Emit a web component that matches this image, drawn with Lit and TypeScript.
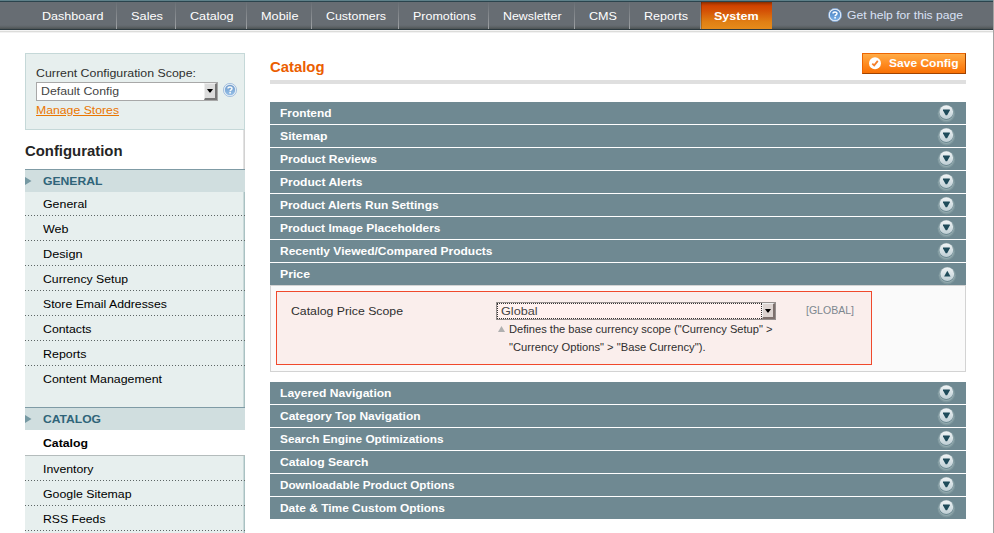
import { LitElement, html, svg, css } from "lit";
import { customElement, property } from "lit/decorators.js";

const measurer = document.createElement("canvas").getContext("2d")!;

/** A single line of text whose glyphs are stretched to fill a given width. */
@customElement("fit-text")
class FitText extends LitElement {
  @property() text = "";
  @property({ type: Number }) w = 0;
  static styles = css`
    :host { display: inline-block; white-space: nowrap; }
    span { display: block; width: max-content; transform-origin: 0 0; }
  `;
  render() {
    const cs = getComputedStyle(this);
    measurer.font = `${cs.fontWeight} ${cs.fontSize} "Liberation Sans"`;
    const scale = this.w / measurer.measureText(this.text).width;
    return html`<span style="transform:scaleX(${scale.toFixed(4)})">${this.text}</span>`;
  }
}

type Item = [label: string, width: number];
const fit = ([label, width]: Item) => html`<fit-text .text=${label} .w=${width}></fit-text>`;

const nav: [string, number, number][] = [
  ["Dashboard", 61.5, 89], ["Sales", 32, 59], ["Catalog", 43.5, 71], ["Mobile", 37.5, 65],
  ["Customers", 60, 87], ["Promotions", 63, 90], ["Newsletter", 58.5, 86], ["CMS", 28, 55], ["Reports", 44, 71],
];
const general: Item[] = [
  ["General", 44], ["Web", 25.5], ["Design", 39.5], ["Currency Setup", 85], ["Store Email Addresses", 124.5],
  ["Contacts", 48.5], ["Reports", 43.5], ["Content Management", 119],
];
const catalog: Item[] = [["Catalog", 45], ["Inventory", 50.5], ["Google Sitemap", 88.5], ["RSS Feeds", 62.5], ["", 0]];
const before: Item[] = [
  ["Frontend", 51.5], ["Sitemap", 47.5], ["Product Reviews", 97], ["Product Alerts", 83], ["Product Alerts Run Settings", 159],
  ["Product Image Placeholders", 160.5], ["Recently Viewed/Compared Products", 212.5], ["Price", 30],
];
const after: Item[] = [
  ["Layered Navigation", 111.5], ["Category Top Navigation", 140.5], ["Search Engine Optimizations", 163.5],
  ["Catalog Search", 88.5], ["Downloadable Product Options", 174.5], ["Date & Time Custom Options", 165],
];

const toggle = (open: boolean) => html`<svg class="toggle ${open ? "open" : ""}" width="20" height="20" viewBox="0 0 20 20">
  <defs><linearGradient id="g" x2="0" y2="1"><stop stop-color="#f0f4f6"/><stop offset="1" stop-color="#bfcfd5"/></linearGradient></defs>
  <circle cx="10.3" cy="10.6" r="8.8" fill="#7e979d"/>
  <circle cx="10.3" cy="10.2" r="7.8" fill="#94abb0"/>
  <circle cx="10.3" cy="9.7" r="7.1" fill="#5f7d86"/>
  <circle cx="10.3" cy="9.1" r="6.9" fill="url(#g)"/>
  ${open
    ? svg`<path d="M10.3 5.7 13.5 11.5H7.1Z" fill="#1f4b5a"/>`
    : svg`<path d="M7 6.4H13.8V7.4L11.1 12.2H9.7L7 7.4Z" fill="#1f4b5a"/>`}
</svg>`;

const help = html`<svg class="help" width="14" height="14" viewBox="0 0 14 14">
  <defs><linearGradient id="h" x2="0" y2="1"><stop stop-color="#4a80c0"/><stop offset="1" stop-color="#7aafe6"/></linearGradient></defs>
  <circle cx="7" cy="7" r="6.7" fill="#e9f0f8"/>
  <circle cx="7" cy="7" r="6.6" fill="none" stroke="#6b98cf" stroke-width=".7"/>
  <circle cx="7" cy="7" r="5.2" fill="url(#h)"/>
  <path d="M5 5.6C5 3.4 9 3.4 9 5.5 9 6.8 7.1 6.8 7.1 8.2" fill="none" stroke="#fff" stroke-width="1.5"/>
  <rect x="6.3" y="9" width="1.6" height="1.5" fill="#fff"/>
</svg>`;

const chevron = html`<svg width="6" height="4" viewBox="0 0 6 4"><path d="M0 0H6L3.5 3.4H2.5Z" fill="#000"/></svg>`;

@customElement("app-root")
class AppRoot extends LitElement {
  static styles = css`
    :host { display: block; box-sizing: border-box; width: 994px; height: 533px; overflow: hidden; background: #fff;
      border-right: 1px solid #a3a3a3; font: 11.5px/14px "Liberation Sans", Arial, sans-serif; color: #2f2f2f; }
    * { box-sizing: border-box; }
    svg { display: block; flex: none; }
    fit-text { flex: none; }
    .top { height: 33px; display: flex; flex-direction: column; background: linear-gradient(#f4f4f4 0 31px, #dcdcda 31px 32px, #f2f2f2 32px); }
    .bar { height: 30px; display: flex; padding: 2px 0 1px 28px; color: #fff;
      background: linear-gradient(#5d8089 0 1px, #2b444d 1px 2px, #676d73 2px 25px, #5d6366 27px, #4b5152 29px, #2b393f 29px); }
    .tab { height: 27px; padding: 7px 0 0 14px; border-right: 1px solid; border-image: linear-gradient(#676d73, #a1a4a7) 1; }
    .tab.active { width: 71px; padding-left: 13px; border: 0; font-weight: bold;
      background: linear-gradient(90deg, #00000030 0 1px, transparent 1px), linear-gradient(#862e00, #b53a00 2px, #d24300 4px, #d45206 9px, #e08014 20px, #e58b1b); }
    .gethelp { display: flex; gap: 5px; margin-left: 56px; padding-top: 6px; color: #d9e1f5; }
    .body { display: flex; padding: 20px 27px 0 25px; gap: 25px; }
    .side { width: 220px; flex: none; height: 480px; }
    .scope { height: 77px; border: 1px solid #c5d8d8; background: #e7efee; padding: 12px 0 0 10px; display: flex; flex-direction: column; align-items: flex-start; }
    .row { display: flex; gap: 5px; }
    .select { display: flex; justify-content: space-between; background: #fff; color: #444; }
    .scope .select { width: 182px; height: 19px; border: 1px solid #a8a8a8; padding: 1px 0 0 4px; }
    .scope .row { margin-top: 2px; }
    .scope .row .help { margin-top: 1px; opacity: .75; }
    .drop { display: flex; align-items: center; justify-content: center; width: 13px; background: #dcdcdc;
      border: 1px solid #eee; border-right: 2px solid #777; border-bottom: 2px solid #777; }
    .scope .drop { height: 17px; margin-top: -1px; }
    .scope a { margin-top: 2px; color: #ea7601; }
    a fit-text { text-decoration: underline; }
    a fit-text, a { display: block; }
    .menu { height: 403px; background: linear-gradient(90deg, transparent 218px, #e2e2e2 218px 219px, #d2d2d2 219px); }
    h3 { margin: 0; height: 39px; padding-top: 12px; font-size: 15px; line-height: 17px; color: #252525; }
    .head { height: 23px; padding: 4px 0 0 18px; border-top: 1px solid #7f9ba5; background: #d0dedf; color: #2f6479; font-weight: bold; position: relative; }
    .head svg { position: absolute; left: 0; top: 7px; }
    .list { background: linear-gradient(90deg, #e7efee 218px, #c9d9d9 218px 219px, #a9c1c2 219px); color: #000; }
    .list div { height: 25px; padding: 6px 0 0 18px;
      background: repeating-linear-gradient(90deg, #5d6565 0 1px, transparent 1px 3px) 0 100% / 100% 1px no-repeat; }
    .list.general div:first-child { height: 24px; padding-top: 5px; }
    .list.general div:last-child { height: 41px; background: none; }
    .list.cat div:first-child { height: 26px; font-weight: bold; background: #fff; border-bottom: 1px solid #b4bcbc; }
    .main { flex: 1; }
    .title { height: 31px; display: flex; justify-content: space-between; border-bottom: 4px solid #dfdfdf; }
    h1 { margin: 5px 0 0; font-size: 15px; line-height: 18px; color: #eb5e00; }
    .save { width: 104px; height: 21px; display: flex; gap: 8px; padding: 2px 0 0 6px; color: #fff; font-weight: bold;
      border: 1px solid; border-color: #ed6502 #a04300 #a04300 #ed6502; background: linear-gradient(#ffac47, #ff8a1f 55%, #f97104); }
    .bars { display: flex; flex-direction: column; gap: 1px; margin-top: 18px; }
    .section { height: 22px; padding: 4px 10px 0; display: flex; justify-content: space-between; background: #6f8992; color: #fff; font-weight: bold; }
    .toggle { margin-top: -3px; }
    .toggle.open { margin: -2px -1px 0 0; }
    .panel { height: 87px; border: 1px solid #d3d3d3; background: #fafafa; padding: 5px; }
    .hot { width: 596px; height: 74px; display: flex; border: 1px solid #f0492c; background: #faeeec; padding: 10px 0 0 14px; }
    .label { width: 205px; padding-top: 2px; }
    .field { width: 280px; }
    .hot .select { height: 18px; border: 1px solid #96908e; background: #fff1ef; }
    .value { flex: 1; padding: 0 0 0 3px; border: 1px dotted #333; }
    .hot .drop { width: 13px; height: 16px; background: #ddd4d1; border-right-color: #7d706d; border-bottom-color: #7d706d; }
    .note { display: flex; font-size: 11px; line-height: 18px; }
    .note svg { margin: 6px 4px 0 2px; }
    .note div { display: flex; flex-direction: column; }
    .lvl { padding: 1px 0 0 30px; font-size: 11px; color: #7d878f; }
    .after { margin-top: 10px; }
  `;

  section([label, width]: Item) {
    return html`<div class="section">${fit([label, width])}${toggle(label === "Price")}</div>`;
  }

  head(item: Item) {
    return html`<div class="head"><svg width="7" height="8" viewBox="0 0 7 8"><path d="M0 0 6.5 4 0 8Z" fill="#7598a2"/></svg>${fit(item)}</div>`;
  }

  render() {
    return html`
      <div class="top"><div class="bar">
        ${nav.map(([label, w, box]) => html`<div class="tab" style="width:${box}px">${fit([label, w])}</div>`)}
        <div class="tab active">${fit(["System", 44.5])}</div>
        <div class="gethelp">${help}${fit(["Get help for this page", 116])}</div>
      </div></div>
      <div class="body">
        <div class="side">
          <div class="scope">
            ${fit(["Current Configuration Scope:", 160])}
            <div class="row"><div class="select">${fit(["Default Config", 78])}<div class="drop">${chevron}</div></div>${help}</div>
            <a>${fit(["Manage Stores", 83])}</a>
          </div>
          <div class="menu">
            <h3>${fit(["Configuration", 97.5])}</h3>
            ${this.head(["GENERAL", 59.5])}
            <div class="list general">${general.map((i) => html`<div>${fit(i)}</div>`)}</div>
            ${this.head(["CATALOG", 58])}
            <div class="list cat">${catalog.map((i) => html`<div>${i[0] ? fit(i) : ""}</div>`)}</div>
          </div>
        </div>
        <div class="main">
          <div class="title">
            <h1>${fit(["Catalog", 54.5])}</h1>
            <div class="save">
              <svg width="12" height="14" viewBox="0 0 12 14"><circle cx="6" cy="7.2" r="6" fill="#fff"/><path d="M3.3 7.6 5.2 9.4 8.8 4.9" fill="none" stroke="#f5802b" stroke-width="1.8"/></svg>
              ${fit(["Save Config", 69.5])}
            </div>
          </div>
          <div class="bars">${before.map((i) => this.section(i))}</div>
          <div class="panel"><div class="hot">
            <div class="label">${fit(["Catalog Price Scope", 112])}</div>
            <div class="field">
              <div class="select"><div class="value">${fit(["Global", 36.5])}</div><div class="drop">${chevron}</div></div>
              <div class="note"><svg width="7" height="6" viewBox="0 0 7 6"><path d="M3.5 0 7 6H0Z" fill="#b0b0b0"/></svg>
                <div>${fit(['Defines the base currency scope ("Currency Setup" >', 263.5])}${fit(['"Currency Options" > "Base Currency").', 196.5])}</div></div>
            </div>
            <div class="lvl">${fit(["[GLOBAL]", 48])}</div>
          </div></div>
          <div class="bars after">${after.map((i) => this.section(i))}</div>
        </div>
      </div>`;
  }
}
